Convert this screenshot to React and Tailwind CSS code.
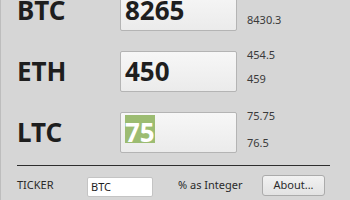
const rows = [
  { ticker: "BTC", value: "8265", hi: "", lo: "8430.3", loTop: 26, selected: false },
  { ticker: "ETH", value: "450", hi: "454.5", lo: "459", loTop: 24, selected: false },
  { ticker: "LTC", value: "75", hi: "75.75", lo: "76.5", loTop: 27, selected: true },
];

const font = { fontFamily: '"Noto Sans", "Open Sans", sans-serif' };

export default function App() {
  return (
    <div
      className="h-[200px] w-[350px] overflow-hidden border-l border-[#bdbdbd] bg-[#d6d6d6] text-[#222]"
      style={font}
    >
      <div className="-mt-[10px] flex flex-col gap-[20px]">
        {rows.map((r) => (
          <div key={r.ticker} className="flex h-[41px] items-start">
            <div className="mt-[3px] w-[119px] pl-[16px]">
              <span className="inline-block pt-[6px] text-[26px] font-bold leading-[22px] text-[#1e1e1e]">
                {r.ticker}
              </span>
            </div>
            <div className="h-[41px] w-[117px] rounded-[2px] border border-[#b4b4b4] bg-gradient-to-b from-[#f7f7f7] to-[#ebebeb] pl-[4px] pt-[2px]">
              <span
                className={
                  r.selected
                    ? "inline-block bg-[#9cbc72] pt-[6px] text-[26px] font-bold leading-[22px] text-white"
                    : "inline-block pt-[6px] text-[26px] font-bold leading-[22px] text-[#1e1e1e]"
                }
              >
                {r.value}
              </span>
            </div>
            <div className="relative ml-[10px] h-[41px] flex-1 text-[11px] leading-[12px] text-[#3a3a3a]">
              {r.hi && <div className="-mt-[2px]">{r.hi}</div>}
              <div className="absolute left-0" style={{ top: r.loTop - 2 }}>
                {r.lo}
              </div>
            </div>
          </div>
        ))}
      </div>

      <div className="ml-[16px] mt-[12px] w-[313px] border-t border-[#2e2e2e]" />

      <div className="mt-[8px] flex h-[22px] items-center pl-[16px] text-[11px] text-[#2a2a2a]">
        <div className="w-[70px]">TICKER</div>
        <div className="mt-[4px] flex h-[20px] w-[66px] items-center rounded-[2px] border border-[#c4c4c4] bg-white pl-[3px] text-[#1e1e1e]">
          BTC
        </div>
        <div className="ml-[25px] w-[84px]">% as Integer</div>
        <button className="flex h-[21px] w-[63px] items-center justify-center rounded-[3px] border border-[#ababab] bg-gradient-to-b from-[#f2f2f2] to-[#e2e2e2] text-[11px] text-[#2a2a2a]">
          About...
        </button>
      </div>
    </div>
  );
}
